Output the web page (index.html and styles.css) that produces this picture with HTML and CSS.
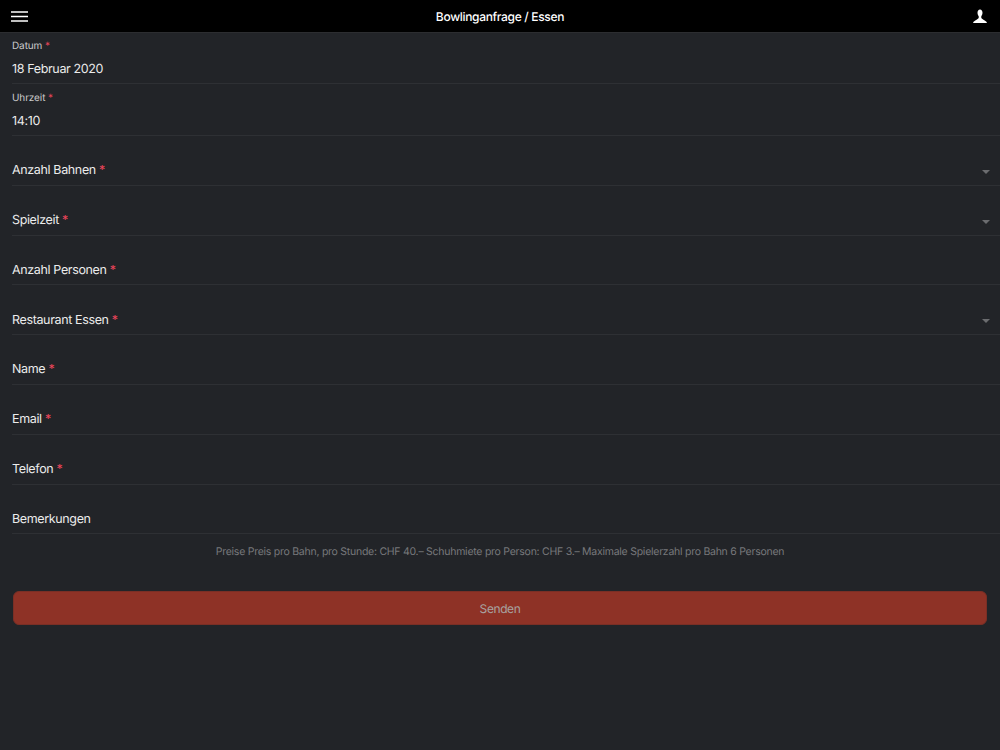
FILE: index.html
```html
<!DOCTYPE html>
<html lang="de">
<head>
<meta charset="utf-8">
<title>Bowlinganfrage / Essen</title>
<link rel="stylesheet" href="styles.css">
</head>
<body>
<header class="toolbar">
  <button class="icon-btn" aria-label="Menü">
    <svg width="18" height="12" viewBox="0 0 18 12"><path d="M0 2h17M0 6.500h17M0 11h17" stroke="#fff" stroke-width="1.300" fill="none"/></svg>
  </button>
  <h1 class="title">Bowlinganfrage / Essen</h1>
  <button class="icon-btn" aria-label="Profil">
    <svg width="14" height="14" viewBox="0 -0.500 14 14"><path d="M7 0C5.500 0 4.500 1.300 4.500 3.200c0 1.500.6 2.800 1.200 3.500v1.900C5.300 9.800 2 10.800.6 12.300L0 13.500h14l-.6-1.200C12 10.800 8.700 9.800 8.300 8.600V6.700c.6-.7 1.200-2 1.200-3.500C9.500 1.300 8.500 0 7 0z" fill="#fff"/></svg>
  </button>
</header>
<main class="form">
  <div class="row stacked first"><span class="small-label">Datum <i>*</i></span><span class="value">18 Februar 2020</span></div>
  <div class="row stacked"><span class="small-label">Uhrzeit <i>*</i></span><span class="value">14:10</span></div>
  <div class="row"><span class="label">Anzahl Bahnen <i>*</i></span><span class="caret"></span></div>
  <div class="row"><span class="label">Spielzeit <i>*</i></span><span class="caret"></span></div>
  <div class="row"><span class="label">Anzahl Personen <i>*</i></span></div>
  <div class="row"><span class="label">Restaurant Essen <i>*</i></span><span class="caret"></span></div>
  <div class="row"><span class="label">Name <i>*</i></span></div>
  <div class="row"><span class="label">Email <i>*</i></span></div>
  <div class="row"><span class="label">Telefon <i>*</i></span></div>
  <div class="row"><span class="label">Bemerkungen</span></div>
  <p class="note">Preise Preis pro Bahn, pro Stunde: CHF 40.– Schuhmiete pro Person: CHF 3.– Maximale Spielerzahl pro Bahn 6 Personen</p>
  <button class="submit">Senden</button>
</main>
</body>
</html>
```
FILE: styles.css
```css
* { box-sizing: border-box; }
html, body { margin: 0; height: 100%; }
body {
  background: #222428;
  color: #ececec;
  font-family: Inter, "Liberation Sans", sans-serif;
  font-size: 12.500px;
  text-rendering: geometricPrecision;
  overflow: hidden;
}
.toolbar {
  height: 33px;
  background: #000;
  border-bottom: 1px solid #2c2d30;
  display: flex;
  align-items: center;
  justify-content: space-between;
  padding: 0 13px 0 11px;
}
.icon-btn {
  background: none;
  border: 0;
  padding: 0;
  display: flex;
}
.title {
  margin: 0 0 0 -2px;
  font-size: 12px;
  font-weight: 500;
  letter-spacing: -0.32px;
  color: #fff;
}
.form { padding-left: 12px; display: flex; flex-direction: column; }
.row {
  height: 49.8px;
  border-bottom: 1px solid #2e3034;
  display: flex;
  align-items: flex-end;
  justify-content: space-between;
  padding: 0 10px 4.500px 0;
}
.row.stacked {
  height: 52px;
  flex-direction: column;
  align-items: flex-start;
  justify-content: flex-start;
  padding: 8px 0 0;
}
.row.first { height: 51px; padding-top: 7px; }
.small-label { font-size: 10px; line-height: 12px; letter-spacing: -0.1px; color: #c9c9ca; }
.value { font-size: 12.500px; line-height: 16px; margin-top: 10px; letter-spacing: -0.36px; }
.label { font-size: 12.500px; line-height: 18px; letter-spacing: -0.36px; }
i { font-style: normal; color: #eb445a; }
.caret {
  width: 0;
  height: 0;
  border-left: 4px solid transparent;
  border-right: 4px solid transparent;
  border-top: 4px solid #6b6c6f;
  margin-bottom: 6.500px;
}
.note {
  margin: 11px 0 0 -12px;
  text-align: center;
  font-size: 10.500px;
  line-height: 13px;
  letter-spacing: -0.255px;
  color: #77787b;
}
.submit {
  margin: 33px 0 0 1px;
  width: 974px;
  height: 34px;
  background: #8e3226;
  border: 1px solid #7a2f25;
  border-radius: 6px;
  color: #a8a3a1;
  font: 12px Inter, "Liberation Sans", sans-serif;
  letter-spacing: -0.4px;
  text-rendering: geometricPrecision;
}
```
